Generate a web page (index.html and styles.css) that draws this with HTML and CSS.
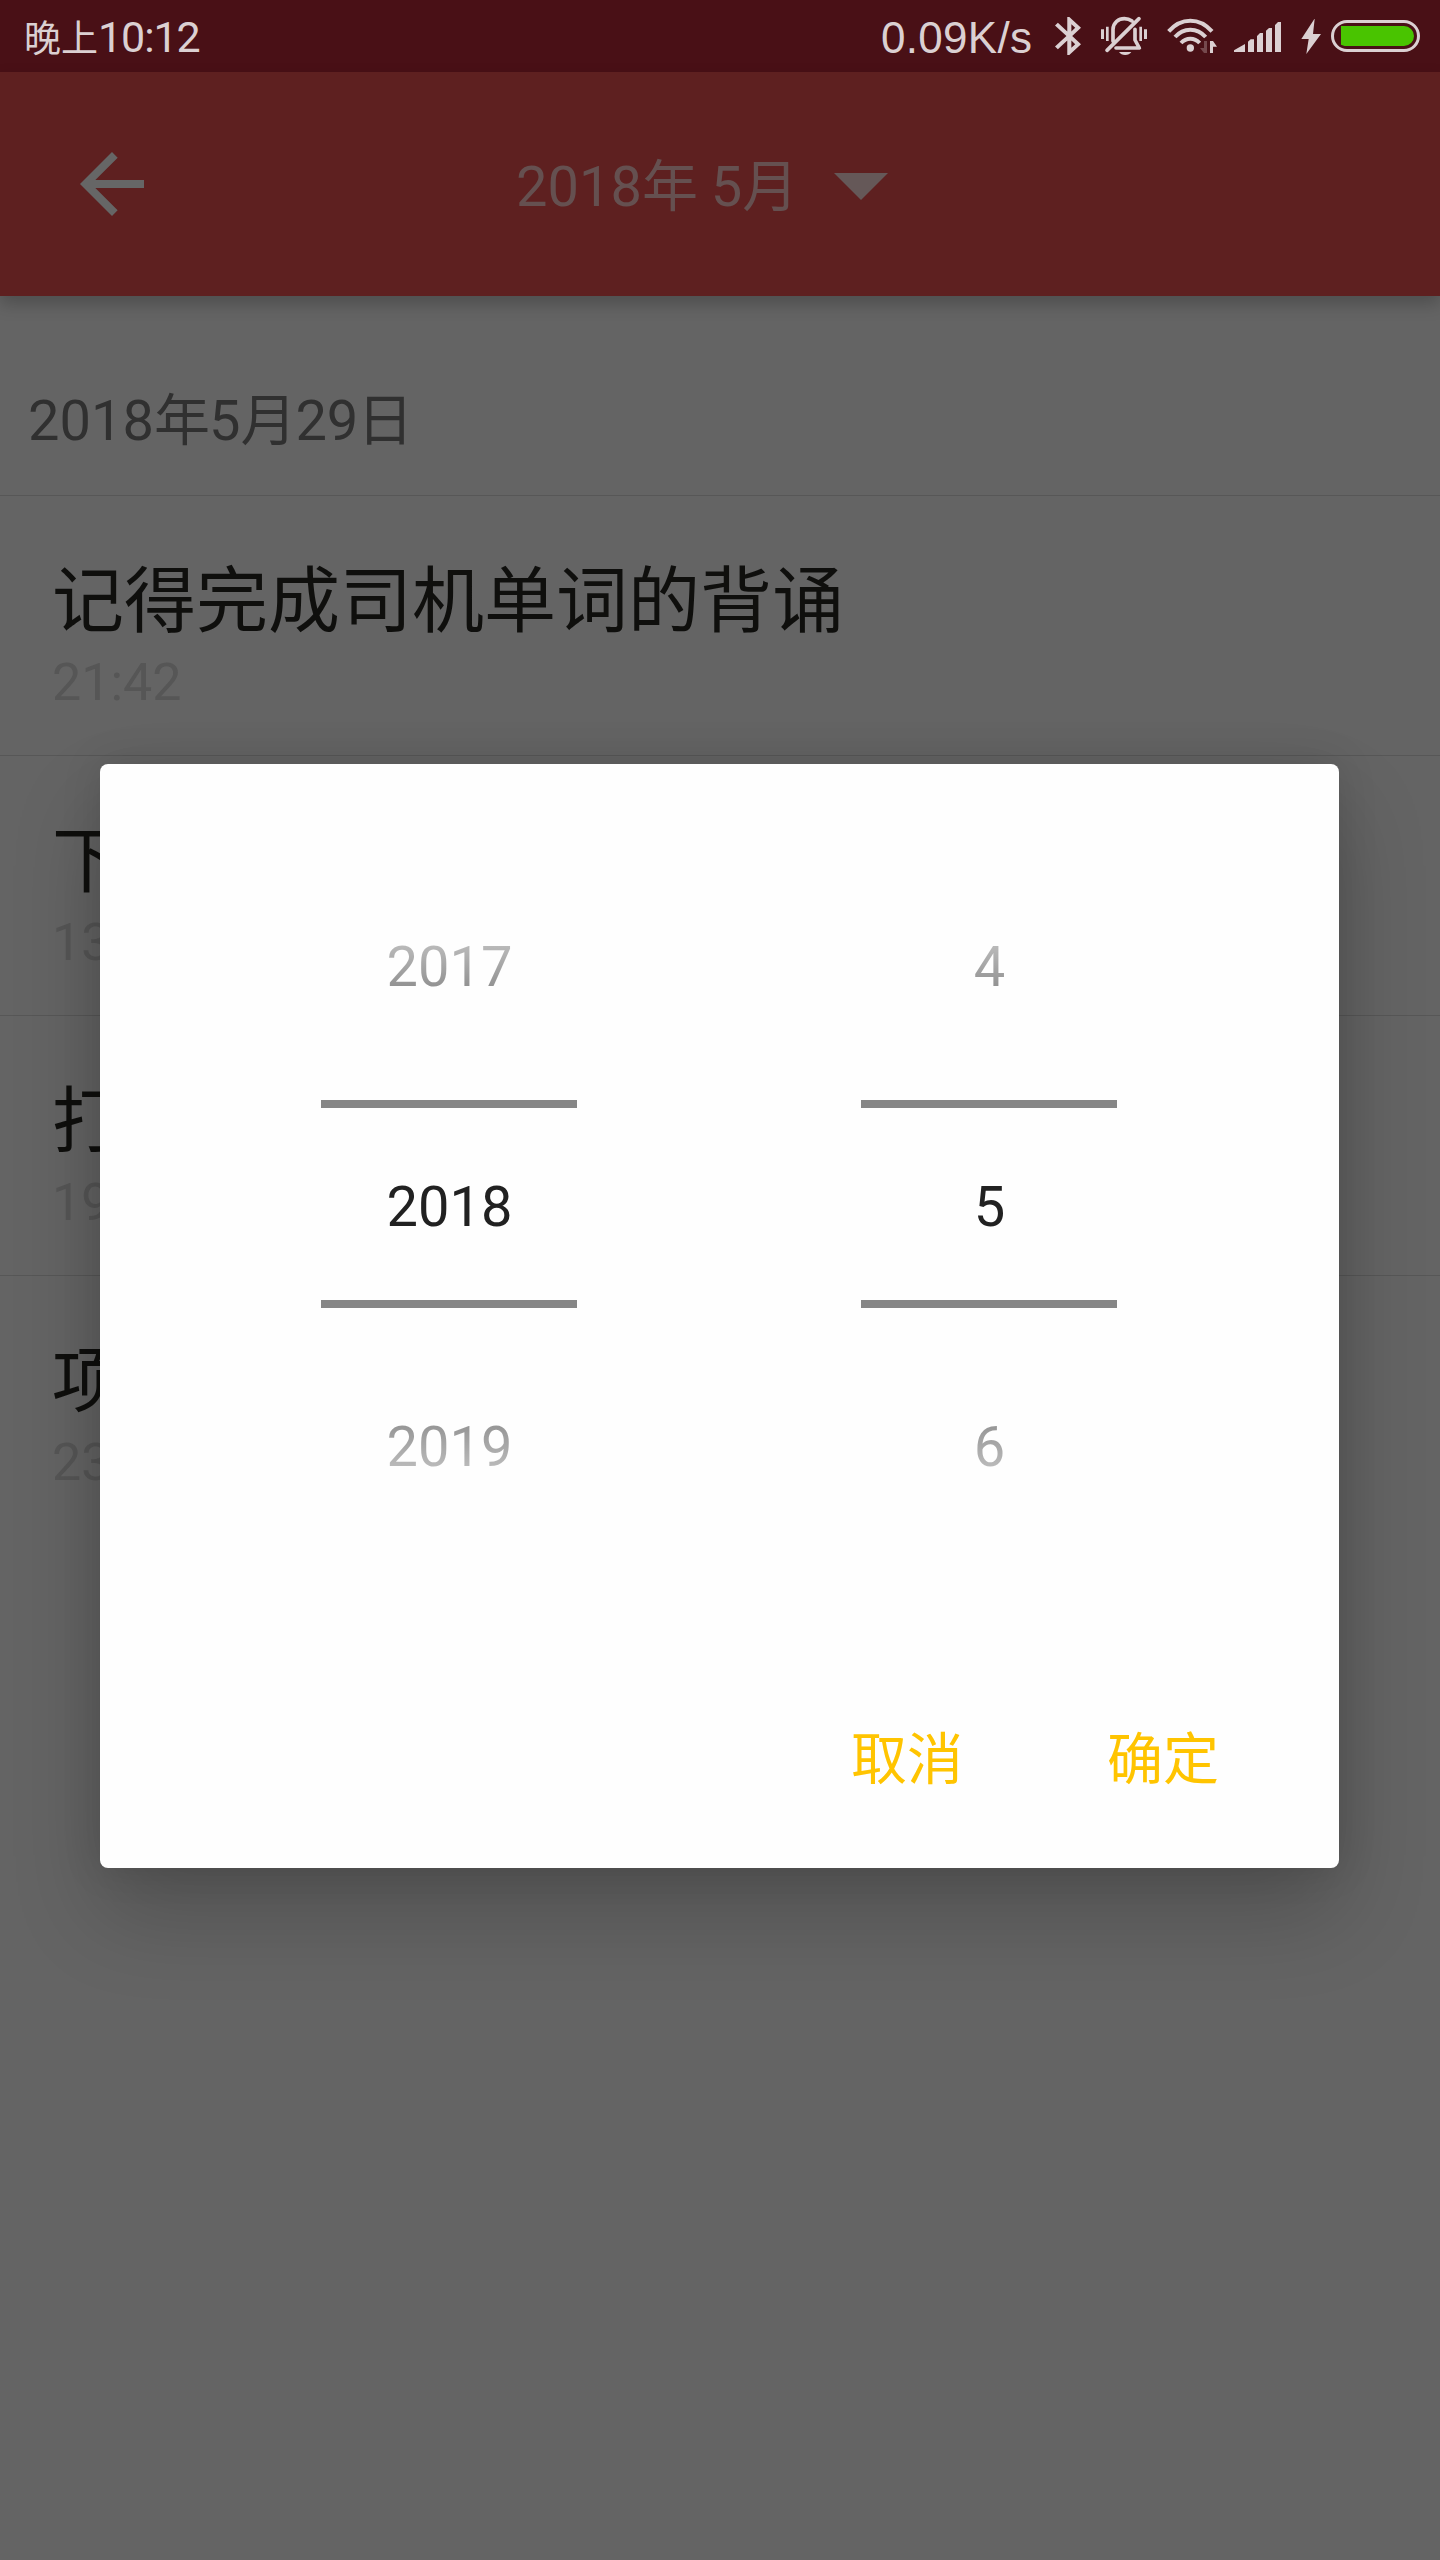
FILE: index.html
```html
<!DOCTYPE html>
<html lang="zh-CN">
<head>
<meta charset="utf-8">
<title>2018年 5月</title>
<link rel="stylesheet" href="styles.css">
</head>
<body>
<div class="screen">
  <div class="status-bar">
    <div class="clock"><span class="period">晚上</span>10:12</div>
    <div class="status-icons">
      <span class="speed">0.09K/s</span>
      <svg class="bluetooth" width="26" height="72" viewBox="585 0 78 216"><path transform="translate(554.3 39.6) scale(6.14 5.7)" d="M17.71 7.71L12 2h-1v7.59L6.41 5 5 6.41 10.59 12 5 17.59 6.41 19 11 14.41V22h1l5.71-5.71-4.3-4.29 4.3-4.29zM13 5.83l1.88 1.88L13 9.59V5.83zm1.88 10.46L13 18.17v-3.76l1.88 1.88z"/></svg>
      <svg class="mute" width="46" height="72" viewBox="723 0 138 216">
        <path d="M723 88h9v29h-9zM738 80h8v43h-8zM838 80h8v43h-8zM852 88h9v29h-9zM777 156h37q-6 9-18.500 9t-18.500-9z"/>
        <path class="line" d="M741 151L837 56M759 124V88C760 67 776 56 793 56Q806 56 816 63M825 88V120L838 144H768"/>
      </svg>
      <svg class="wifi" width="50" height="72" viewBox="51 0 150 216">
        <path class="arc" d="M56 94Q84 62 121 62T186 94M75 111Q94 89 121 89T167 111M93 129Q105 116 121 116T149 129"/>
        <circle cx="121" cy="144" r="11"/>
        <path class="dim" d="M162 123h9v36h-9l-12-15h12z"/>
        <path d="M180 159v-36h9l12 17h-12v19z"/>
      </svg>
      <svg class="signal" width="48" height="72" viewBox="252 0 144 216"><path d="M252 156v-5l33-19v24zM294 156v-31l8-7h10v38zM321 156v-48l9-9h9v57zM348 156V92l9-8h9v72zM375 156V75l9-9h9v90z"/></svg>
      <svg class="bolt" width="20" height="72" viewBox="453 0 60 216"><path d="M493 57L454 117H476L469 162L513 102H489L494 57z"/></svg>
      <svg class="battery" width="89" height="72" viewBox="543 0 267 216">
        <rect class="shell" x="547.500" y="64.500" width="258" height="87" rx="43.500"/>
        <path class="charge" d="M573 78H762A30 30 0 0 1 762 138H584L573 134z"/>
      </svg>
    </div>
  </div>

  <header class="app-bar">
    <svg class="back" width="96" height="96" viewBox="0 0 24 24"><path d="M20 11H7.830l5.590-5.590L12 4l-8 8 8 8 1.410-1.410L7.830 13H20v-2z"/></svg>
    <div class="month">
      <span class="month-text">2018<span class="unit">年</span> 5<span class="unit">月</span></span>
      <svg class="caret" width="54" height="27" viewBox="0 0 54 27"><path d="M0 0H54L27 27z"/></svg>
    </div>
  </header>

  <main class="notes">
    <h2 class="date">2018<span class="unit">年</span>5<span class="unit">月</span>29<span class="unit day">日</span></h2>
    <article class="note"><h3>记得完成司机单词的背诵</h3><time>21:42</time></article>
    <article class="note"><h3>下</h3><time>13</time></article>
    <article class="note"><h3>打</h3><time>19</time></article>
    <article class="note last"><h3>项</h3><time>23</time></article>
  </main>

  <div class="dialog">
    <div class="pickers">
      <div class="picker">
        <div class="value before">2017</div>
        <div class="value selected">2018</div>
        <div class="value after">2019</div>
      </div>
      <div class="picker">
        <div class="value before">4</div>
        <div class="value selected">5</div>
        <div class="value after">6</div>
      </div>
    </div>
    <div class="actions"><span>取消</span><span>确定</span></div>
  </div>
</div>
</body>
</html>
```
FILE: styles.css
```css
* { box-sizing: border-box; }

body {
  margin: 0;
  background: #646464;
  font-family: Roboto, "Noto Sans CJK SC", sans-serif;
}

.screen {
  position: relative;
  width: 1440px;
  height: 2560px;
  overflow: hidden;
  background: #646464;
}

svg { display: block; flex: none; }

/* Status bar */
.status-bar {
  display: flex;
  justify-content: space-between;
  height: 72px;
  padding: 0 20px 0 24px;
  background: #491016;
  color: #dbd0d2;
  fill: #dbd0d2;
}

.clock {
  font-size: 43px;
  line-height: 75px;
  letter-spacing: -1.1px;
  white-space: nowrap;
}

.period { font-size: 37px; letter-spacing: 0; }

.status-icons { display: flex; }

.speed {
  width: 174px;
  font-family: "Liberation Sans", sans-serif;
  font-size: 44px;
  line-height: 75px;
  letter-spacing: 0.3px;
  white-space: nowrap;
}

.bluetooth, .mute { margin-right: 20px; }
.wifi { margin-right: 17px; }
.signal { margin-right: 19px; }
.bolt { margin-right: 10px; }

.line { fill: none; stroke: #dbd0d2; stroke-width: 11; stroke-linecap: round; stroke-linejoin: round; }
.arc { fill: none; stroke: #dbd0d2; stroke-width: 12; }
.dim { fill: #75494d; }
.shell { fill: none; stroke: #dbd0d2; stroke-width: 9; }
.charge { fill: #49c400; }

/* App bar */
.app-bar {
  position: relative;
  display: flex;
  align-items: center;
  height: 224px;
  padding-left: 64px;
  background: #5e2020;
  box-shadow: 0 8px 16px rgba(0, 0, 0, 0.22);
}

.back { fill: #666; }

.month {
  display: flex;
  align-items: center;
  margin-left: 356px;
}

.month-text {
  width: 318px;
  padding-top: 6px;
  color: #655050;
  font-size: 56px;
  line-height: 80px;
  white-space: nowrap;
}

.unit { letter-spacing: -1px; }
.day { margin-left: -1px; }

.caret { fill: #655858; margin-top: 5px; }

/* Notes */
.date {
  height: 200px;
  margin: 0;
  padding: 85px 28px 0;
  border-bottom: 1px solid #575757;
  color: #303030;
  font-size: 56px;
  font-weight: 400;
  line-height: 80px;
}

.note {
  height: 260px;
  padding: 58px 52px 0;
  border-bottom: 1px solid #575757;
}

.note.last { border-bottom: 0; }

.note h3 {
  margin: 0 0 1px;
  color: #0f0f0d;
  font-size: 72px;
  font-weight: 400;
  line-height: 96px;
}

.note time {
  display: block;
  color: #565656;
  font-size: 52px;
  line-height: 64px;
}

/* Month picker dialog, over the page */
.dialog {
  position: absolute;
  top: 764px;
  left: 100px;
  width: 1239px;
  height: 1104px;
  padding-top: 96px;
  border-radius: 8px;
  background: #fefefe;
  box-shadow: 0 45px 90px rgba(0, 0, 0, 0.2), 0 0 40px rgba(0, 0, 0, 0.12);
}

.pickers {
  display: flex;
  gap: 284px;
  padding-left: 221px;
}

.picker { width: 256px; }

.value {
  padding-left: 1px;
  font-size: 56px;
  text-align: center;
}

.before, .after {
  color: transparent;
  -webkit-background-clip: text;
  background-clip: text;
}

.before {
  height: 240px;
  line-height: 214px;
  background-image: linear-gradient(#bababa 85px, #929292 127px);
}

.selected {
  height: 208px;
  padding-top: 6px;
  border-top: 8px solid #868686;
  border-bottom: 8px solid #868686;
  color: #212121;
  line-height: 187px;
}

.after {
  height: 240px;
  padding-top: 39px;
  line-height: 200px;
  background-image: linear-gradient(#969696 117px, #bababa 159px);
}

.actions {
  display: flex;
  gap: 144px;
  padding: 172px 0 0 751px;
  color: #ffc400;
  font-size: 56px;
  line-height: 80px;
}
```
